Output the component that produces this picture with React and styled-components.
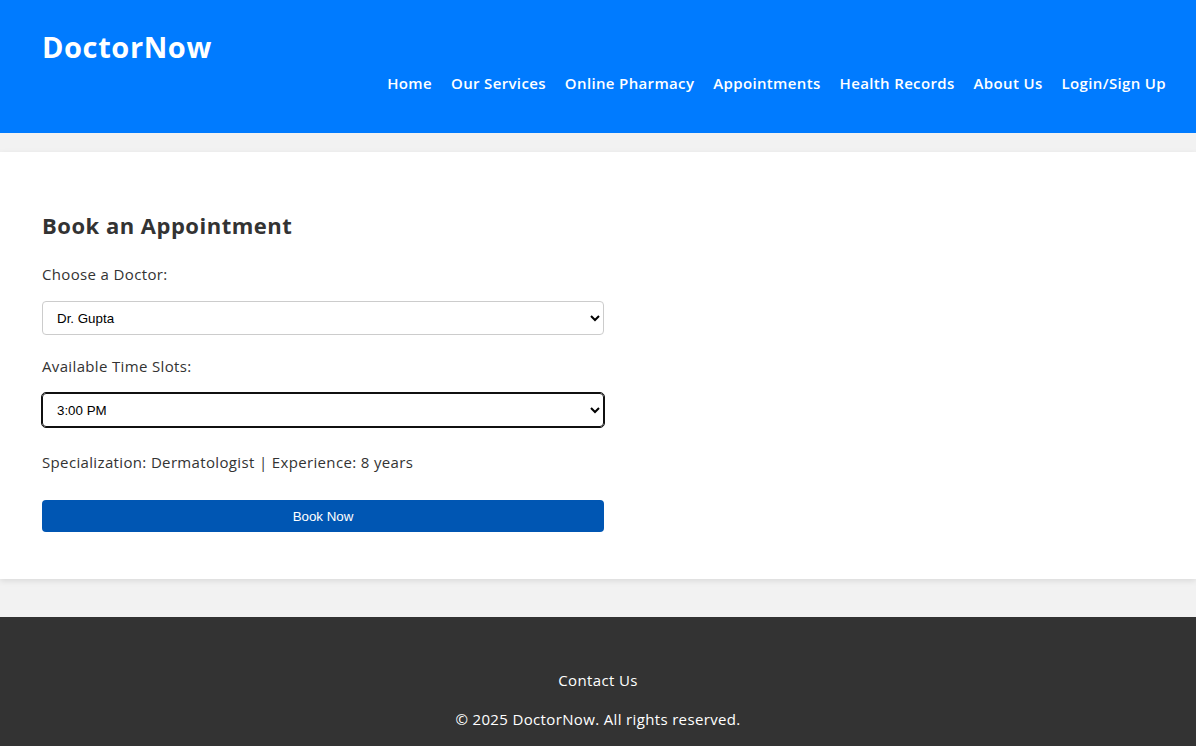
import React, { useState } from "react";
import styled, { createGlobalStyle } from "styled-components";

const GlobalStyle = createGlobalStyle`
    body {
        margin: 0;
        background-color: #f2f2f2;
        font-family: "Open Sans", "Noto Sans", sans-serif;
        color: #333;
    }
`;

const Header = styled.header`
    height: 133px;
    box-sizing: border-box;
    background-color: #007bff;
    color: white;
    display: flex;
    justify-content: space-between;
    align-items: flex-start;
    padding: 27px 30px 0 42px;
`;

const Logo = styled.h1`
    margin: 0;
    font-size: 29px;
    line-height: 40px;
    font-weight: 700;
    letter-spacing: 0.6px;
`;

const NavList = styled.ul`
    display: flex;
    gap: 19px;
    list-style: none;
    margin: 45px 0 0;
    padding: 0;
`;

const NavItem = styled.li`
    font-size: 15px;
    line-height: 22px;
    font-weight: 600;
    letter-spacing: 0.35px;
    white-space: nowrap;
`;

const Main = styled.main`
    padding: 19px 0 38px;
`;

const Section = styled.section`
    background-color: white;
    padding: 58px 42px 47px;
    box-shadow: 0 2px 6px rgba(0, 0, 0, 0.1);
`;

const Title = styled.h2`
    margin: 0;
    font-size: 22px;
    line-height: 30px;
    font-weight: 700;
    letter-spacing: 0.5px;
    color: #333;
`;

const Label = styled.label`
    display: block;
    margin-top: ${props => props.top}px;
    font-size: 15px;
    line-height: 22px;
    letter-spacing: 0.35px;
    color: #333;
`;

const Select = styled.select`
    display: block;
    box-sizing: border-box;
    width: 562px;
    height: 34px;
    margin-top: 16px;
    padding: 0 10px;
    font-family: "Liberation Sans", Arial, sans-serif;
    font-size: 13.33px;
    color: #000;
    background-color: white;
    border: 1px solid ${props => (props.focused ? "#101010" : "#ccc")};
    border-radius: 4px;
    outline: ${props => (props.focused ? "1px solid #101010" : "none")};
`;

const Info = styled.p`
    margin: 24px 0 0;
    font-size: 15px;
    line-height: 22px;
    letter-spacing: 0.35px;
    color: #333;
`;

const Button = styled.button`
    display: block;
    width: 562px;
    height: 32px;
    margin-top: 27px;
    background-color: #0056b3;
    color: white;
    border: none;
    border-radius: 4px;
    font-family: "Liberation Sans", Arial, sans-serif;
    font-size: 13.33px;
    cursor: pointer;
`;

const Footer = styled.footer`
    background-color: #333;
    color: white;
    text-align: center;
    padding: 52px 0 30px;
    font-size: 15px;
    line-height: 22px;
    letter-spacing: 0.35px;
`;

const FooterLine = styled.p`
    margin: ${props => props.top}px 0 0;
`;

const navLinks = [
    "Home",
    "Our Services",
    "Online Pharmacy",
    "Appointments",
    "Health Records",
    "About Us",
    "Login/Sign Up",
];

const doctors = {
    "Dr. Gupta": { spec: "Dermatologist", exp: 8 },
    "Dr. Sharma": { spec: "Cardiologist", exp: 12 },
    "Dr. Mehta": { spec: "Pediatrician", exp: 10 },
};

const App = () => {
    const [doctor, setDoctor] = useState("Dr. Gupta");
    const [slot, setSlot] = useState("3:00 PM");
    const info = doctors[doctor];

    return (
        <>
            <GlobalStyle />
            <Header>
                <Logo>DoctorNow</Logo>
                <nav>
                    <NavList>
                        {navLinks.map(link => (
                            <NavItem key={link}>{link}</NavItem>
                        ))}
                    </NavList>
                </nav>
            </Header>
            <Main>
                <Section>
                    <Title>Book an Appointment</Title>
                    <Label top={23} htmlFor="doctor">Choose a Doctor:</Label>
                    <Select id="doctor" value={doctor} onChange={e => setDoctor(e.target.value)}>
                        {Object.keys(doctors).map(d => (
                            <option key={d}>{d}</option>
                        ))}
                    </Select>
                    <Label top={20} htmlFor="slot">Available Time Slots:</Label>
                    <Select id="slot" focused value={slot} onChange={e => setSlot(e.target.value)}>
                        <option>10:00 AM</option>
                        <option>1:00 PM</option>
                        <option>3:00 PM</option>
                    </Select>
                    <Info>
                        Specialization: {info.spec} | Experience: {info.exp} years
                    </Info>
                    <Button>Book Now</Button>
                </Section>
            </Main>
            <Footer>
                <FooterLine top={0}>Contact Us</FooterLine>
                <FooterLine top={17}>© 2025 DoctorNow. All rights reserved.</FooterLine>
            </Footer>
        </>
    );
};

export default App;
